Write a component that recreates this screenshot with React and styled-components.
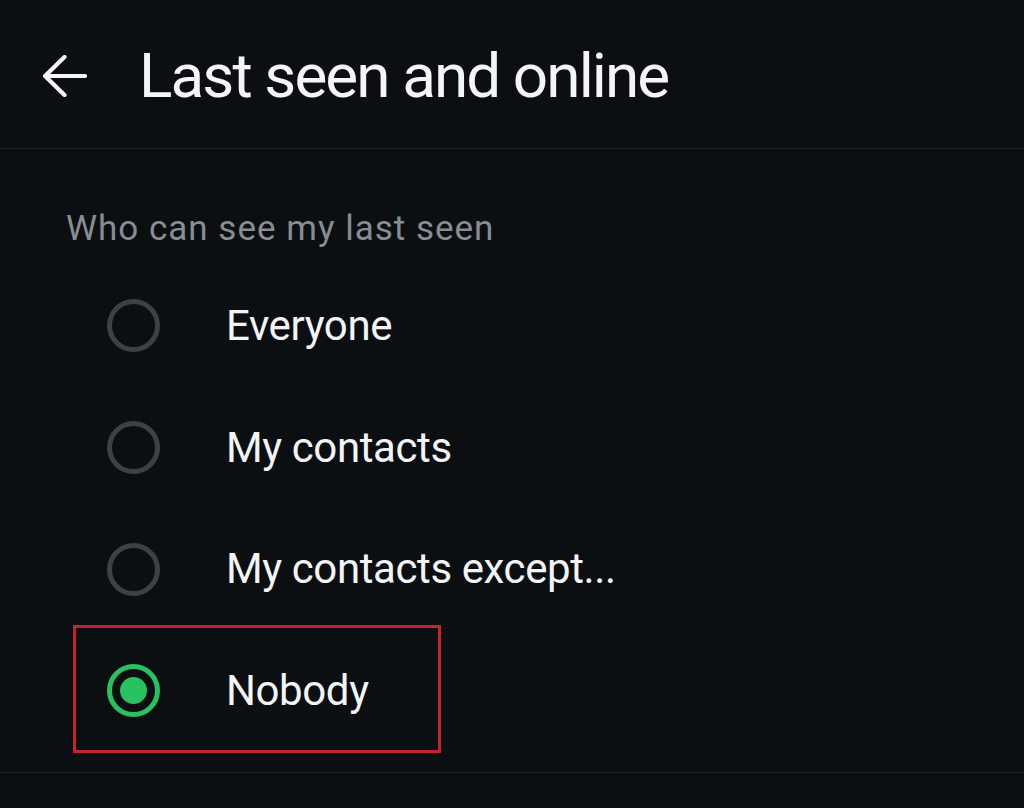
import styled, { createGlobalStyle } from 'styled-components'

const GlobalStyle = createGlobalStyle`
  html, body {
    margin: 0;
    padding: 0;
    background: #0b0f12;
  }
  body {
    font-family: Roboto, "Noto Sans", sans-serif;
    color: #f1f3f4;
  }
`

const Screen = styled.div`
  width: 1024px;
  height: 808px;
  overflow: hidden;
  background: #0b0f12;
`

const Header = styled.header`
  height: 149px;
  display: flex;
  align-items: center;
  padding: 3px 0 0 43px;
  box-sizing: border-box;
  border-bottom: 1px solid #1d2226;
`

const BackButton = styled.button`
  display: flex;
  padding: 0;
  border: 0;
  background: none;
  color: #f4f5f6;
  cursor: pointer;
`

const Title = styled.h1`
  margin: 0 0 0 52px;
  font-size: 62px;
  font-weight: 400;
  letter-spacing: -1.9px;
  line-height: 72px;
  color: #f4f5f6;
`

const Section = styled.section`
  padding-top: 60px;
  border-bottom: 1px solid #1d2226;
  padding-bottom: 20px;
`

const SectionLabel = styled.div`
  padding-left: 66px;
  font-size: 35px;
  line-height: 40px;
  letter-spacing: 1px;
  color: #878d92;
  margin-bottom: 16px;
`

const OptionRow = styled.label`
  position: relative;
  display: flex;
  align-items: center;
  height: 121.7px;
  padding-left: 107px;
  cursor: pointer;
`

const Radio = styled.span`
  box-sizing: border-box;
  width: 53px;
  height: 53px;
  border-radius: 50%;
  border: 5px solid ${p => (p.checked ? '#27c160' : '#3a4147')};
  display: flex;
  align-items: center;
  justify-content: center;
  &::after {
    content: '';
    display: ${p => (p.checked ? 'block' : 'none')};
    width: 27px;
    height: 27px;
    border-radius: 50%;
    background: #27c160;
  }
`

const OptionText = styled.span`
  margin-left: 66px;
  font-size: 42px;
  letter-spacing: -0.4px;
  line-height: 50px;
  color: #f3f4f5;
`

// annotation box drawn over the selected row
const Highlight = styled.span`
  position: absolute;
  left: 73px;
  top: -5px;
  width: 368px;
  height: 128px;
  box-sizing: border-box;
  border: 3px solid #c9222f;
  pointer-events: none;
`

const options = [
  { label: 'Everyone' },
  { label: 'My contacts' },
  { label: 'My contacts except...' },
  { label: 'Nobody', checked: true },
]

const ArrowLeft = () => (
  <svg width="44" height="42" viewBox="0 0 44 42" fill="none">
    <path
      d="M2 21H42M21.5 2L2 21L21.5 40"
      stroke="currentColor"
      strokeWidth="4.2"
      strokeLinecap="round"
      strokeLinejoin="round"
    />
  </svg>
)

export default function App() {
  return (
    <Screen>
      <GlobalStyle />
      <Header>
        <BackButton aria-label="Back">
          <ArrowLeft />
        </BackButton>
        <Title>Last seen and online</Title>
      </Header>
      <Section>
        <SectionLabel>Who can see my last seen</SectionLabel>
        {options.map(o => (
          <OptionRow key={o.label}>
            <Radio checked={o.checked} />
            <OptionText>{o.label}</OptionText>
            {o.checked && <Highlight />}
          </OptionRow>
        ))}
      </Section>
    </Screen>
  )
}
